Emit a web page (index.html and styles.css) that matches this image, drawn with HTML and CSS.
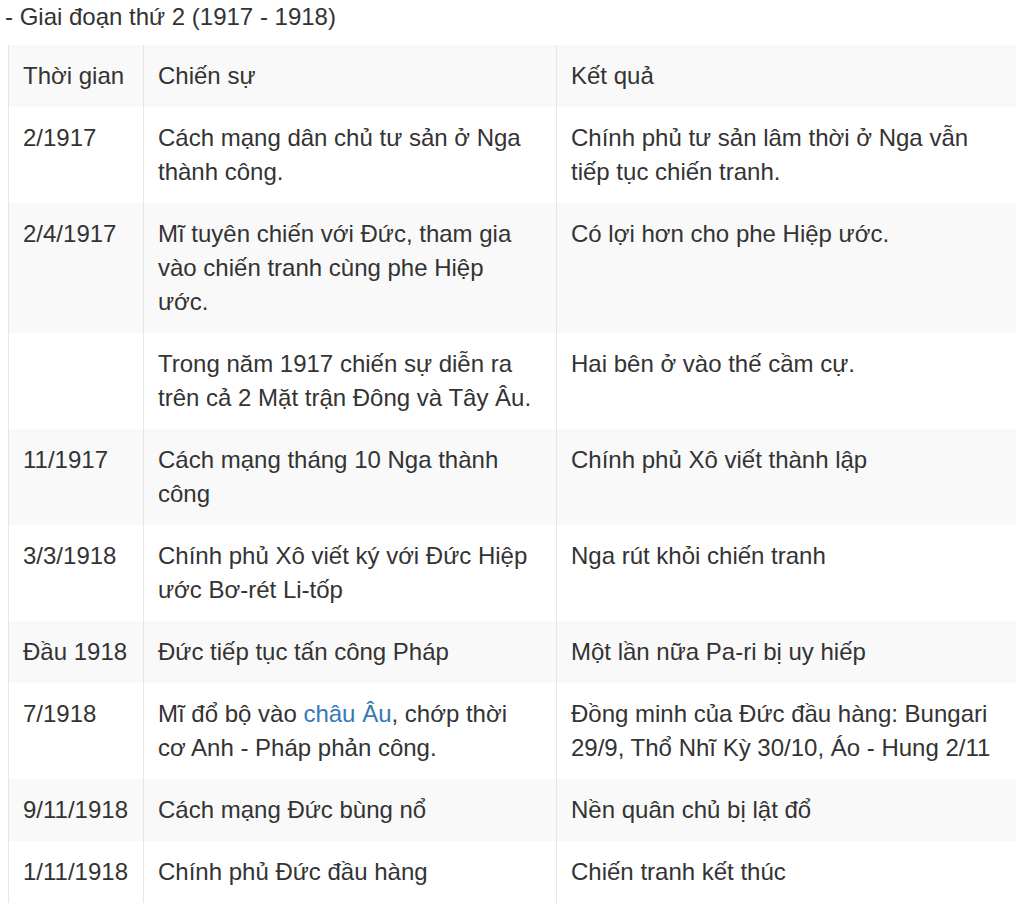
FILE: index.html
```html
<!DOCTYPE html>
<html lang="vi">
<head>
<meta charset="utf-8">
<link rel="stylesheet" href="styles.css">
</head>
<body>
<p class="title">- Giai đoạn thứ 2 (1917 - 1918)</p>
<table class="events">
  <colgroup>
    <col class="c-time">
    <col class="c-event">
    <col class="c-result">
  </colgroup>
  <tr><td>Thời gian</td><td>Chiến sự</td><td>Kết quả</td></tr>
  <tr><td>2/1917</td><td>Cách mạng dân chủ tư sản ở Nga thành công.</td><td>Chính phủ tư sản lâm thời ở Nga vẫn tiếp tục chiến tranh.</td></tr>
  <tr><td>2/4/1917</td><td>Mĩ tuyên chiến với Đức, tham gia vào chiến tranh cùng phe Hiệp ước.</td><td>Có lợi hơn cho phe Hiệp ước.</td></tr>
  <tr><td></td><td>Trong năm 1917 chiến sự diễn ra trên cả 2 Mặt trận Đông và Tây Âu.</td><td>Hai bên ở vào thế cầm cự.</td></tr>
  <tr><td>11/1917</td><td>Cách mạng tháng 10 Nga thành công</td><td>Chính phủ Xô viết thành lập</td></tr>
  <tr><td>3/3/1918</td><td>Chính phủ Xô viết ký với Đức Hiệp ước Bơ-rét Li-tốp</td><td>Nga rút khỏi chiến tranh</td></tr>
  <tr><td>Đầu 1918</td><td>Đức tiếp tục tấn công Pháp</td><td>Một lần nữa Pa-ri bị uy hiếp</td></tr>
  <tr><td>7/1918</td><td>Mĩ đổ bộ vào <a class="link" href="#">châu Âu</a>, chớp thời cơ Anh - Pháp phản công.</td><td>Đồng minh của Đức đầu hàng: Bungari 29/9, Thổ Nhĩ Kỳ 30/10, Áo - Hung 2/11</td></tr>
  <tr><td>9/11/1918</td><td>Cách mạng Đức bùng nổ</td><td>Nền quân chủ bị lật đổ</td></tr>
  <tr><td>1/11/1918</td><td>Chính phủ Đức đầu hàng</td><td>Chiến tranh kết thúc</td></tr>
</table>
</body>
</html>
```

FILE: styles.css
```css
html, body {
  margin: 0;
  padding: 0;
  background: #fff;
}
body {
  font-family: "Liberation Sans", Arial, sans-serif;
  font-size: 24px;
  line-height: 34px;
  color: #333;
}
.title {
  margin: 0 0 11px 0;
  padding-left: 5px;
}
.events {
  margin-left: 8px;
  width: 1007px;
  border-collapse: collapse;
  table-layout: fixed;
  border-left: 1px solid #e6e6e6;
}
.c-time { width: 135px; }
.c-event { width: 413px; }
.c-result { width: 459px; }
.events td {
  vertical-align: top;
  padding: 14px 13px 14px 14px;
  border-left: 1px solid #e6e6e6;
}
.events td:nth-child(2) { padding-right: 22px; }
.events td:first-child { border-left: 0; }
.events tr:nth-child(odd) td { background: #f9f9f9; }
.link {
  color: #337ab7;
  text-decoration: none;
}
```
